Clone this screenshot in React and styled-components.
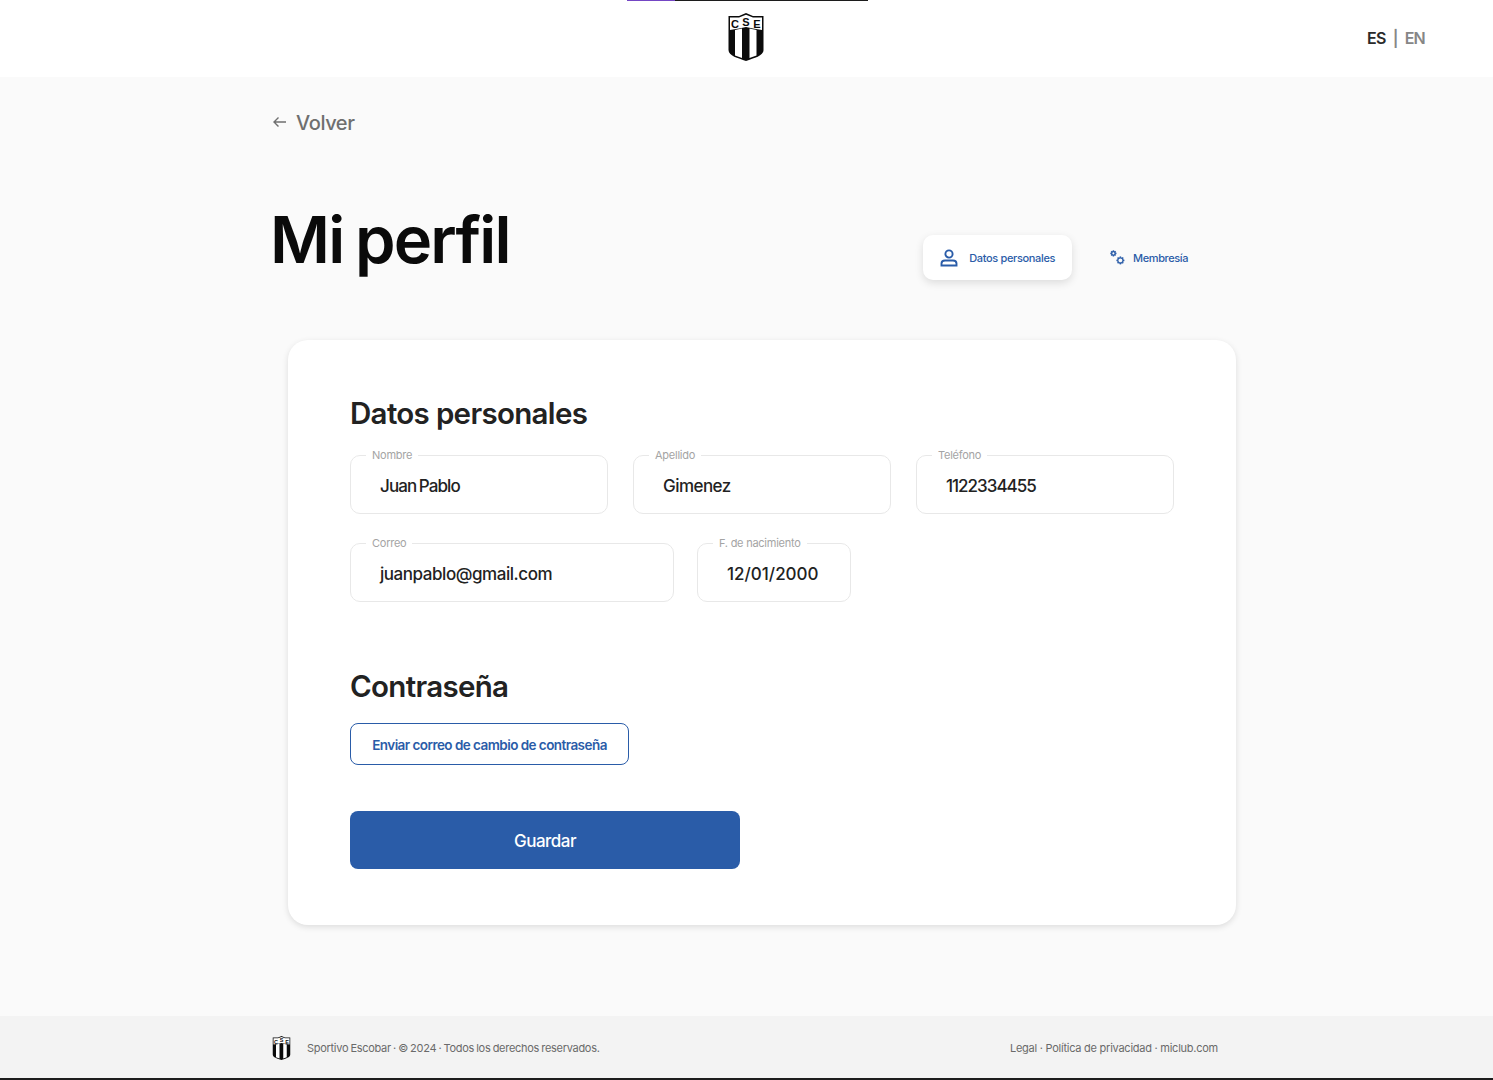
import React from "react";
import styled, { createGlobalStyle } from "styled-components";

const Global = createGlobalStyle`
  html, body { margin: 0; padding: 0; background: #fafafa; }
  body { font-family: Inter, "Liberation Sans", sans-serif; color: #1c1c1c; }
  * { box-sizing: border-box; }
`;
const Page = styled.div`
  width: 1493px; height: 1080px; display: flex; flex-direction: column; overflow: hidden;
`;
const Header = styled.header`
  position: relative; height: 77px; flex: none; background: #fff;
  display: flex; align-items: center; justify-content: center;
  padding: 0 2px 3px 0;
`;
const Progress = styled.div`
  position: absolute; top: 0; left: 627px; width: 241px; height: 1px; background: #1c1c1c;
  &::before { content: ""; display: block; width: 48px; height: 1px; background: #7446c4; }
`;
const Lang = styled.div`
  position: absolute; right: 68px; top: 28px; font-size: 16px; font-weight: 600; line-height: 20px;
  letter-spacing: -0.75px; color: #868686; display: flex; gap: 7px;
  b { font-weight: 600; color: #2a2a2a; }
`;
const Main = styled.main`
  flex: 1; padding: 33px 0 0 272px; display: flex; flex-direction: column;
`;
const Back = styled.a`
  display: flex; align-items: center; gap: 9px; height: 26px; color: #6f6f6f;
  font-size: 20px; font-weight: 500; letter-spacing: -0.4px;
  svg { margin-top: -2px; }
`;
const TitleRow = styled.div`
  display: flex; justify-content: space-between; align-items: flex-start; margin-top: 65px; height: 139px;
  width: 933px;
`;
const Title = styled.h1`
  margin: 0 0 0 -2px; font-size: 65px; line-height: 78px; font-weight: 600; letter-spacing: -1.8px; word-spacing: -3px; color: #0a0a0a;
`;
const Tabs = styled.nav`
  display: flex; align-items: center; margin-top: 34px; gap: 22px;
`;
const Tab = styled.button`
  height: 45px; border: 0; border-radius: 10px; display: flex; align-items: center; font-family: inherit;
  font-size: 11px; font-weight: 500; letter-spacing: ${p => (p.$active ? "-0.35px" : "-0.4px")}; color: #2a5ca8; white-space: nowrap;
  padding: ${p => (p.$active ? "0 17px 0 17px" : "0 17px 0 16px")}; gap: ${p => (p.$active ? "11px" : "8px")};
  background: ${p => (p.$active ? "#fff" : "transparent")};
  box-shadow: ${p => (p.$active ? "0 3px 8px rgba(0,0,0,.12)" : "none")};
`;
const Card = styled.section`
  margin-left: 16px; width: 948px; height: 585px; background: #fff; border-radius: 20px;
  box-shadow: 0 2px 6px rgba(0,0,0,.12); padding: 53px 62px 0;
`;
const H2 = styled.h2`
  margin: ${p => p.$top || 0}px 0 0; font-size: 29.5px; line-height: 40px; font-weight: 600; letter-spacing: -0.68px; color: #222;
`;
const Row = styled.div`
  display: flex; gap: ${p => p.$gap}px; margin-top: ${p => p.$top}px;
`;
const Field = styled.fieldset`
  margin: 0; width: ${p => p.$w}px; height: 59px; padding: 0 0 0 15px; min-width: 0;
  border: 1px solid #e8e8e8; border-radius: 10px;
`;
const Legend = styled.legend`
  padding: 0 6px; font-size: 11px; line-height: 0; height: 1px; color: #a4a4a4; letter-spacing: -0.25px;
`;
const Value = styled.div`
  font-size: 17px; line-height: 22px; font-weight: 500; color: #222; word-spacing: -1.5px;
  letter-spacing: ${p => p.$track}px; padding: 19px 0 0 14px;
`;
const Outline = styled.button`
  display: block; margin-top: 17px; width: 279px; height: 42px; padding: 2px 0 0; background: #fff; border: 1px solid #2a5ca8; border-radius: 8px;
  color: #2a5ca8; font-family: inherit; font-size: 13.5px; font-weight: 600; letter-spacing: -0.55px;
`;
const Save = styled.button`
  display: block; margin-top: 46px; width: 390px; height: 58px; padding: 2px 0 0; background: #2a5ca8; border: 0; border-radius: 8px;
  color: #fff; font-family: inherit; font-size: 17px; font-weight: 500; letter-spacing: -0.5px;
`;
const Footer = styled.footer`
  height: 64px; flex: none; background: #f3f3f3; border-bottom: 2px solid #1c1c1c;
  display: flex; align-items: center; justify-content: space-between; padding: 1px 275px 0 272px;
  font-size: 11px; color: #6a6a6a;
`;
const FootLeft = styled.div`
  display: flex; align-items: center; gap: 16px; letter-spacing: -0.29px; word-spacing: -0.6px;
`;
const FootRight = styled.span`
  letter-spacing: -0.25px;
`;

const letter = { fontSize: 11, fontWeight: 700, fontFamily: "Liberation Sans, sans-serif", textAnchor: "middle", fill: "#0b0b0b" };
const Shield = ({ w, h }) => (
  <svg width={w} height={h} viewBox="0 0 36 48">
    <path d="M0.500 3 L11 3 L18 0 L25 3 L35.500 3 V37 C35.500 43 26 45 18 48 C10 45 0.500 43 0.500 37 Z" fill="#0b0b0b" />
    <path d="M2 4.500 L11 4.500 L18 1.800 L25 4.500 L34 4.500 V17 L25 15.500 L18 14 L11 15.500 L2 17 Z" fill="#fff" />
    <path d="M7 17 L14 15.500 V45 L7 42.500 Z M21.500 15.500 L28.500 17 V42.500 L21.500 45 Z" fill="#fff" />
    <text x="7" y="15" {...letter}>C</text>
    <text x="18" y="12.500" {...letter}>S</text>
    <text x="29" y="15" {...letter}>E</text>
  </svg>
);

const Gear = ({ x, y, r }) => {
  const teeth = [0, 45, 90, 135];
  return (
    <g transform={`translate(${x} ${y})`}>
      {teeth.map(a => (
        <line key={a} x1={-r - 1.4} x2={r + 1.4} y1="0" y2="0" transform={`rotate(${a})`} stroke="#2a5ca8" strokeWidth="1.5" />
      ))}
      <circle r={r} fill="#fafafa" stroke="#2a5ca8" strokeWidth="1.3" />
    </g>
  );
};

export default function App() {
  return (
    <Page>
      <Global />
      <Header>
        <Progress />
        <Shield w={36} h={48} />
        <Lang><b>ES</b><span>|</span><span>EN</span></Lang>
      </Header>
      <Main>
        <Back>
          <svg width="15" height="12" viewBox="0 0 15 12" fill="none" stroke="#6f6f6f" strokeWidth="1.4">
            <path d="M14 6H2M6.500 1.500L2 6l4.500 4.500" />
          </svg>
          Volver
        </Back>
        <TitleRow>
          <Title>Mi perfil</Title>
          <Tabs>
            <Tab $active>
              <svg width="18" height="18" viewBox="0 0 18 18" fill="none" stroke="#2a5ca8" strokeWidth="1.9">
                <circle cx="9" cy="5" r="3.6" />
                <path d="M1.500 16.500V14.500C1.500 12.500 3 11.500 5 11.500H13C15 11.500 16.500 12.500 16.500 14.500V16.500Z" />
              </svg>
              Datos personales
            </Tab>
            <Tab>
              <svg width="15" height="15" viewBox="0 0 15 15">
                <Gear x={3.4} y={3.4} r={1.7} />
                <Gear x={10.4} y={10.4} r={2.6} />
              </svg>
              Membresía
            </Tab>
          </Tabs>
        </TitleRow>
        <Card>
          <H2>Datos personales</H2>
          <Row $gap={25} $top={22}>
            <Field $w={258}><Legend>Nombre</Legend><Value $track={-0.85}>Juan Pablo</Value></Field>
            <Field $w={258}><Legend>Apellido</Legend><Value $track={-0.55}>Gimenez</Value></Field>
            <Field $w={258}><Legend>Teléfono</Legend><Value $track={-1}>1122334455</Value></Field>
          </Row>
          <Row $gap={23} $top={29}>
            <Field $w={324}><Legend>Correo</Legend><Value $track={-0.45}>juanpablo@gmail.com</Value></Field>
            <Field $w={154}><Legend>F. de nacimiento</Legend><Value $track={0}>12/01/2000</Value></Field>
          </Row>
          <H2 $top={64}>Contraseña</H2>
          <Outline>Enviar correo de cambio de contraseña</Outline>
          <Save>Guardar</Save>
        </Card>
      </Main>
      <Footer>
        <FootLeft>
          <Shield w={19} h={24} />
          <span>Sportivo Escobar · © 2024 · Todos los derechos reservados.</span>
        </FootLeft>
        <FootRight>Legal · Política de privacidad · miclub.com</FootRight>
      </Footer>
    </Page>
  );
}
